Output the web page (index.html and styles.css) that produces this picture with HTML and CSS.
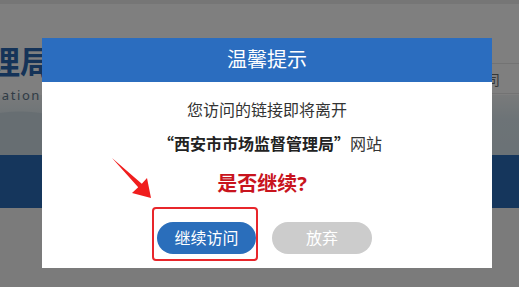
FILE: index.html
```html
<!DOCTYPE html>
<html lang="zh-CN">
<head>
<meta charset="utf-8">
<title>温馨提示</title>
<link rel="stylesheet" href="styles.css">
</head>
<body>
<div class="site">
  <div class="topbar"></div>
  <header class="head">
    <div class="logo">
      <div class="logo-cn">西安市市场监督管理局</div>
      <div class="logo-en">Xi'an Administration for Market Regulation</div>
    </div>
    <nav class="nav">
      <span class="nav-item">公司</span>
    </nav>
  </header>
  <div class="banner"></div>
  <div class="menu"></div>
  <div class="content"></div>
</div>

<div class="mask"></div>

<div class="dialog">
  <div class="dialog-head">温馨提示</div>
  <div class="dialog-body">
    <p class="msg">您访问的链接即将离开</p>
    <p class="msg site-name"><b><span class="q">“</span>西安市市场监督管理局<span class="q">”</span></b>网站</p>
    <p class="ask">是否继续?</p>
    <div class="actions">
      <button class="btn btn-go">继续访问</button>
      <button class="btn btn-cancel">放弃</button>
    </div>
  </div>
</div>

<svg class="annot" width="519" height="287" viewBox="0 0 519 287">
  <polygon points="112,158 141.8,183.8 147,178 151,198 132,193 138.2,187.2" fill="#f01d1d"/>
  <rect x="153" y="208" width="104" height="52" rx="3" ry="3" fill="none" stroke="#e8262b" stroke-width="2"/>
</svg>
</body>
</html>
```

FILE: styles.css
```css
* { box-sizing: border-box; }
html, body { margin: 0; padding: 0; }
body {
  width: 519px;
  height: 287px;
  overflow: hidden;
  background: #ffffff;
  font-family: "Noto Sans", "Noto Sans CJK SC", sans-serif;
}

.site { display: flex; flex-direction: column; }
.topbar { height: 4px; background: #ececec; }
.head {
  height: 91px;
  display: flex;
  justify-content: space-between;
  align-items: flex-start;
}
.logo {
  position: relative;
  z-index: 1;
  width: 52px;
  display: flex;
  flex-direction: column;
  align-items: flex-end;
  padding-top: 40px;
}
.logo-cn {
  font-size: 32px;
  font-weight: 700;
  line-height: 36px;
  color: #2a66b0;
  white-space: nowrap;
}
.logo-en {
  width: 52px;
  padding-right: 11px;
  display: flex;
  justify-content: flex-end;
  font-size: 13px;
  line-height: 14px;
  letter-spacing: 1.6px;
  color: #62788c;
  white-space: nowrap;
  margin-top: 8px;
}
.nav {
  margin-top: 59px;
  width: 320px;
  height: 31px;
  border-top: 1px solid #e6e6e6;
  border-bottom: 1px solid #e6e6e6;
  display: flex;
  justify-content: flex-end;
  align-items: center;
  padding-right: 19px;
}
.nav-item { font-size: 14px; color: #6e6e6e; }

.banner {
  height: 60px;
  background:
    radial-gradient(ellipse 70px 34px at 20px 50px, #cfdde4 0 97%, transparent 100%),
    linear-gradient(#f2f5f6, #dae7ee 40%, #d6e4ec);
}
.menu { height: 53px; background: #2a6cb8; }
.content { height: 79px; background: #f7f7f7; }

.mask {
  position: fixed;
  inset: 0;
  z-index: 10;
  background: rgba(0, 0, 0, 0.5);
}

.dialog {
  position: fixed;
  z-index: 20;
  left: 42px;
  top: 38px;
  width: 450px;
  height: 230px;
  background: #ffffff;
  display: flex;
  flex-direction: column;
}
.dialog-head {
  height: 44px;
  background: #2b6dbf;
  color: #ffffff;
  font-size: 20px;
  line-height: 44px;
  text-align: center;
}
.dialog-body {
  display: flex;
  flex-direction: column;
  align-items: center;
}
.msg {
  margin: 9px 0 0;
  font-size: 16px;
  line-height: 24px;
  color: #333333;
}
.msg:first-child { margin-top: 16px; }
.site-name { padding-left: 6px; }
.site-name b { color: #222222; font-weight: 700; }
.q {
  display: inline-block;
  width: 16px;
  font-family: "Noto Sans CJK SC", sans-serif;
}
.q:first-child { text-align: right; }
.q:last-child { text-align: left; }
.ask {
  margin: 14px 0 0;
  padding-right: 10px;
  font-size: 20px;
  line-height: 28px;
  font-weight: 700;
  color: #c8141d;
}
.actions {
  margin-top: 24px;
  display: flex;
  gap: 16px;
  padding-right: 5px;
}
.btn {
  height: 32px;
  border: none;
  border-radius: 16px;
  color: #ffffff;
  font-family: "Noto Sans", "Noto Sans CJK SC", sans-serif;
  font-size: 16px;
  line-height: 32px;
  padding: 0;
}
.btn-go { width: 99px; background: #2a6ebb; }
.btn-cancel { width: 100px; background: #cccccc; }

.annot {
  position: fixed;
  z-index: 30;
  left: 0;
  top: 0;
  pointer-events: none;
}
```
